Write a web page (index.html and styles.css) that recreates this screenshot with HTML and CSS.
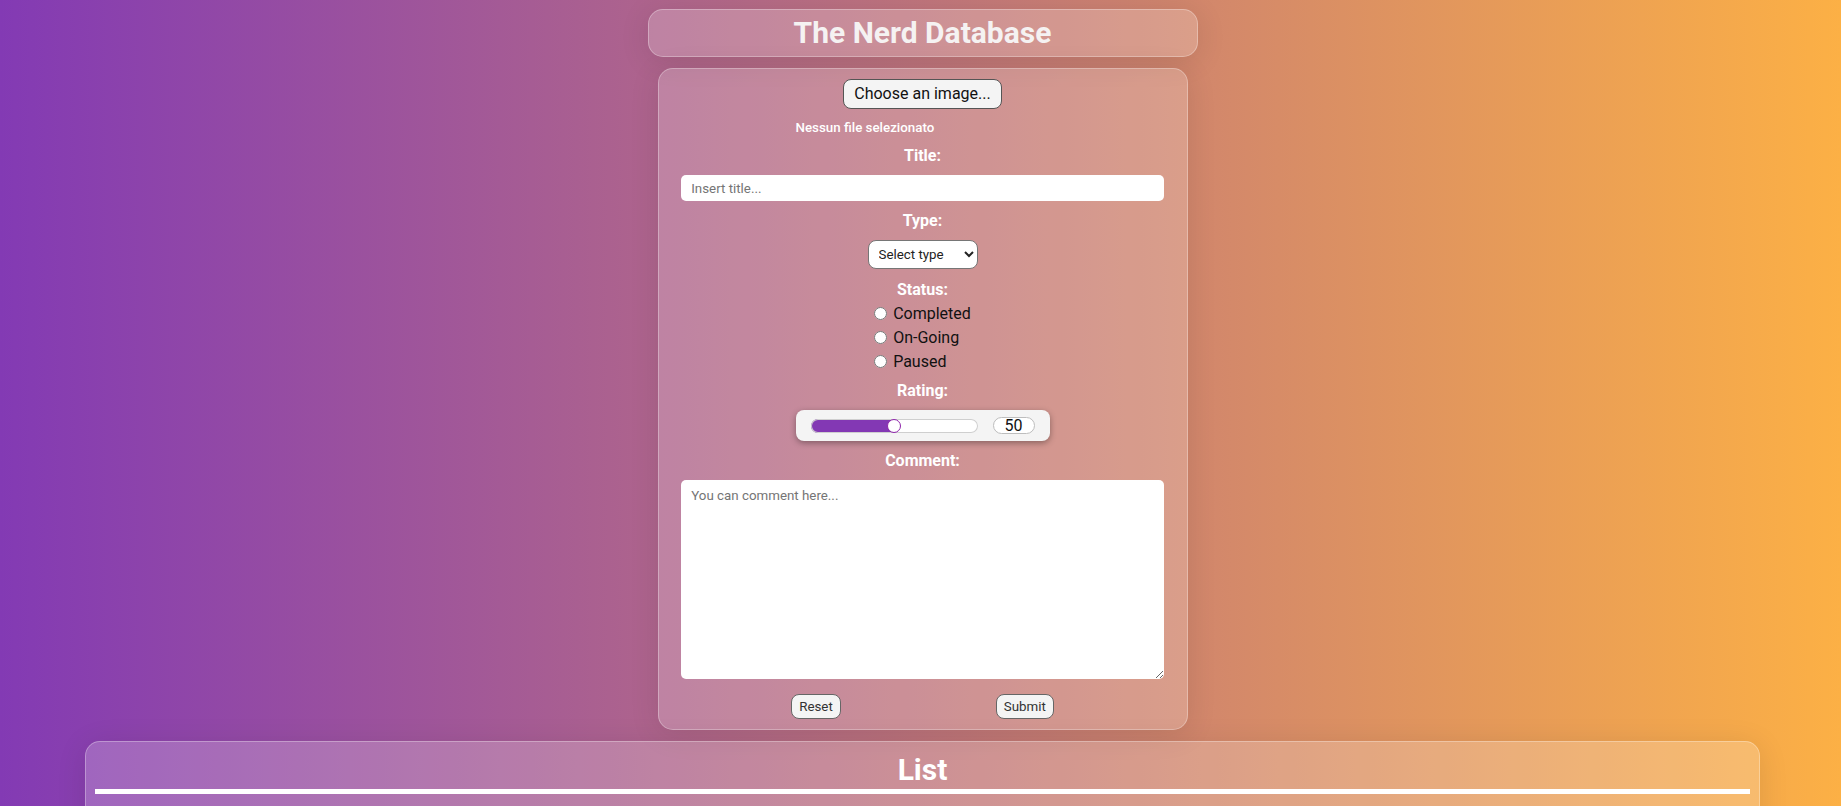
FILE: index.html
```html
<!DOCTYPE html>
<html lang="it">
<head>
<meta charset="utf-8">
<title>The Nerd Database</title>
<link rel="stylesheet" href="styles.css">
</head>
<body>
<header class="site-header glass">
  <h1 class="site-title">The Nerd Database</h1>
</header>

<form class="entry-form glass">
  <label class="file-button" for="cover">Choose an image...</label>
  <input type="file" id="cover" class="file-input" accept="image/*">
  <span class="file-name">Nessun file selezionato</span>

  <label class="field-label" for="title">Title:</label>
  <input type="text" id="title" class="text-input" placeholder="Insert title...">

  <label class="field-label" for="type">Type:</label>
  <select id="type" class="type-select">
    <option>Select type</option>
    <option>Anime</option>
    <option>Manga</option>
    <option>Videogame</option>
    <option>Film</option>
    <option>Serie TV</option>
  </select>

  <div class="status-group">
    <span class="field-label status-label">Status:</span>
    <div class="status-options">
      <label class="status-option"><input type="radio" name="status" class="radio"> Completed</label>
      <label class="status-option"><input type="radio" name="status" class="radio"> On-Going</label>
      <label class="status-option"><input type="radio" name="status" class="radio"> Paused</label>
    </div>
  </div>

  <label class="field-label" for="rating">Rating:</label>
  <div class="rating-box">
    <input type="range" id="rating" class="rating-range" min="0" max="100" value="50">
    <output class="rating-value" for="rating">50</output>
  </div>

  <label class="field-label" for="comment">Comment:</label>
  <textarea id="comment" class="comment-input" placeholder="You can comment here..."></textarea>

  <div class="form-actions">
    <button type="reset" class="small-button">Reset</button>
    <button type="submit" class="small-button">Submit</button>
  </div>
</form>

<section class="list-card glass">
  <h2 class="list-title">List</h2>
  <div class="list-divider"></div>
  <ul class="entry-list"></ul>
</section>
</body>
</html>
```

FILE: styles.css
```css
* {
  box-sizing: border-box;
}

html {
  min-height: 100%;
  background: linear-gradient(to right, #833ab4, #fcb045);
}

body {
  margin: 0;
  padding: 9px 0 40px 4px;
  font-family: Roboto, "Liberation Sans", sans-serif;
}

.glass {
  background: rgba(255, 255, 255, 0.2);
  border: 1px solid rgba(255, 255, 255, 0.3);
  border-radius: 15px;
  box-shadow: 0 4px 30px rgba(0, 0, 0, 0.1);
}

/* header */
.site-header {
  width: 550px;
  margin: 0 auto;
  padding: 4px 0;
  text-align: center;
}

.site-title {
  margin: 0;
  font-size: 30px;
  font-weight: 700;
  line-height: 38px;
  color: #f5f2f2;
}

/* form */
.entry-form {
  width: 530px;
  margin: 11px auto 0;
  padding: 10px;
  display: flex;
  flex-direction: column;
  align-items: center;
  gap: 10px;
}

.file-button {
  display: block;
  padding: 5px 10px;
  font-size: 16px;
  line-height: 18px;
  color: #111;
  background: #f4f4f4;
  border: 1px solid #555;
  border-radius: 8px;
  cursor: pointer;
}

.file-input {
  display: none;
}

.file-name {
  width: 254px;
  font-size: 13.33px;
  line-height: 17px;
  font-weight: 500;
  color: #fff;
}

.field-label {
  font-size: 16px;
  font-weight: 700;
  line-height: 19px;
  color: #fff;
}

.text-input {
  width: 95%;
  height: 26px;
  padding: 0 10px;
  border: none;
  border-radius: 5px;
  background: #fff;
  font-family: Roboto, "Liberation Sans", sans-serif;
  font-size: 13.33px;
  color: #222;
}

.text-input::placeholder,
.comment-input::placeholder {
  color: #757575;
}

.type-select {
  width: 110px;
  height: 29px;
  padding: 0 6px;
  border: 1px solid #767676;
  border-radius: 8px;
  background: #fff;
  font-family: Roboto, "Liberation Sans", sans-serif;
  font-size: 13.33px;
  color: #222;
}

/* status */
.status-group {
  display: flex;
  flex-direction: column;
  align-items: center;
  margin-top: -1px;
  margin-bottom: -2px;
}

.status-label {
  line-height: 23px;
}

.status-options {
  display: flex;
  flex-direction: column;
}

.status-option {
  display: flex;
  align-items: center;
  height: 24px;
  font-size: 16px;
  color: #111;
}

.radio {
  width: 13px;
  height: 13px;
  margin: 0 6px 0 0;
}

/* rating */
.rating-box {
  width: 254px;
  height: 31px;
  padding: 0 15px;
  display: flex;
  align-items: center;
  gap: 15px;
  background: #f4f4f4;
  border-radius: 8px;
  box-shadow: 0 2px 6px rgba(0, 0, 0, 0.35);
}

.rating-range {
  -webkit-appearance: none;
  appearance: none;
  width: 167px;
  height: 14px;
  margin: 0;
  border-radius: 7px;
  background: linear-gradient(to right, #8338b4 0 50%, #fff 50% 100%);
  box-shadow: inset 0 0 0 1px #cfcfcf;
}

.rating-range::-webkit-slider-thumb {
  -webkit-appearance: none;
  appearance: none;
  width: 14px;
  height: 14px;
  border-radius: 50%;
  background: #fff;
  border: 1.5px solid #8e24aa;
}

.rating-value {
  width: 42px;
  height: 17px;
  display: flex;
  align-items: center;
  justify-content: center;
  background: #fff;
  border: 1px solid #bdbdbd;
  border-radius: 9px;
  font-size: 16px;
  line-height: 15px;
  color: #111;
}

/* comment */
.comment-input {
  width: 95%;
  height: 199px;
  padding: 8px 10px;
  border: none;
  border-radius: 5px;
  background: #fff;
  font-family: Roboto, "Liberation Sans", sans-serif;
  font-size: 13.33px;
  color: #222;
}

.form-actions {
  margin-top: 5px;
  display: flex;
  justify-content: center;
  gap: 155px;
}

.small-button {
  height: 25px;
  padding: 0 7px;
  background: #f4f4f4;
  border: 1px solid #666;
  border-radius: 8px;
  font-family: Roboto, "Liberation Sans", sans-serif;
  font-size: 13.33px;
  color: #333;
}

/* list */
.list-card {
  width: 1675px;
  min-height: 240px;
  margin: 11px auto 0;
  padding: 9px 9px 20px;
}

.list-title {
  margin: 0;
  font-size: 30px;
  font-weight: 700;
  line-height: 38px;
  text-align: center;
  color: #fff;
}

.list-divider {
  height: 5px;
  background: #fff;
}

.entry-list {
  margin: 0;
  padding: 0;
  list-style: none;
}
```
